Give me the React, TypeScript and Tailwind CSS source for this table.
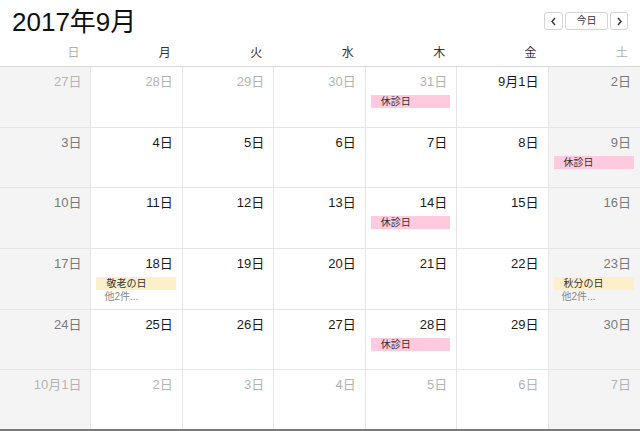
import React from "react";

type Ev = { label: string; kind: "pink" | "yellow" };
type Day = { label: string; muted?: boolean; events?: Ev[]; more?: string };

const weekdays = ["日", "月", "火", "水", "木", "金", "土"];

const weeks: Day[][] = [
	[
		{ label: "27日", muted: true },
		{ label: "28日", muted: true },
		{ label: "29日", muted: true },
		{ label: "30日", muted: true },
		{ label: "31日", muted: true, events: [{ label: "休診日", kind: "pink" }] },
		{ label: "9月1日" },
		{ label: "2日" },
	],
	[
		{ label: "3日" },
		{ label: "4日" },
		{ label: "5日" },
		{ label: "6日" },
		{ label: "7日" },
		{ label: "8日" },
		{ label: "9日", events: [{ label: "休診日", kind: "pink" }] },
	],
	[
		{ label: "10日" },
		{ label: "11日" },
		{ label: "12日" },
		{ label: "13日" },
		{ label: "14日", events: [{ label: "休診日", kind: "pink" }] },
		{ label: "15日" },
		{ label: "16日" },
	],
	[
		{ label: "17日" },
		{ label: "18日", events: [{ label: "敬老の日", kind: "yellow" }], more: "他2件..." },
		{ label: "19日" },
		{ label: "20日" },
		{ label: "21日" },
		{ label: "22日" },
		{ label: "23日", events: [{ label: "秋分の日", kind: "yellow" }], more: "他2件..." },
	],
	[
		{ label: "24日" },
		{ label: "25日" },
		{ label: "26日" },
		{ label: "27日" },
		{ label: "28日", events: [{ label: "休診日", kind: "pink" }] },
		{ label: "29日" },
		{ label: "30日" },
	],
	[
		{ label: "10月1日", muted: true },
		{ label: "2日", muted: true },
		{ label: "3日", muted: true },
		{ label: "4日", muted: true },
		{ label: "5日", muted: true },
		{ label: "6日", muted: true },
		{ label: "7日", muted: true },
	],
];

function Cell({ day, col }: { day: Day; col: number }) {
	const weekend = col === 0 || col === 6;
	let color = "text-[#1a1a1a]";
	if (day.muted) color = "text-[#b4b4b4]";
	else if (weekend) color = "text-[#7a7a7a]";

	return (
		<div
			className={`flex flex-col border-b border-[#e6e6e6] ${col < 6 ? "border-r" : ""} ${
				weekend ? "bg-[#f4f4f4]" : "bg-white"
			}`}
		>
			<div className={`text-right pr-[9px] pt-[7px] text-[13px] leading-[16px] ${color}`}>{day.label}</div>
			<div className="flex flex-col pl-[5px] pr-[6px] pt-[5px]">
				{day.events?.map((e, i) => (
					<div
						key={i}
						className={`h-[13px] pl-[10px] text-[10px] leading-[13px] text-[#333] ${
							e.kind === "pink" ? "bg-[#ffcade]" : "bg-[#fdefca]"
						}`}
					>
						{e.label}
					</div>
				))}
				{day.more && <div className="pl-[8px] text-[10px] leading-[14px] text-[#888]">{day.more}</div>}
			</div>
		</div>
	);
}

export default function App() {
	return (
		<div
			className="relative w-[640px] h-[431px] flex flex-col bg-white overflow-hidden"
			style={{ fontFamily: '"Liberation Sans", "Noto Sans CJK JP", sans-serif' }}
		>
			<header className="h-[67px] shrink-0 flex flex-col border-b border-[#d6d6d6]">
				<div className="flex items-start justify-between">
					<h1 className="pl-[12px] pt-[6px] text-[26px] leading-[32px] text-[#111]">2017年9月</h1>
					<div className="flex gap-[2px] pt-[12px] pr-[12px]">
						<button className="w-[19px] h-[18px] border border-[#d4d4d4] rounded-[3px] bg-white flex items-center justify-center text-[#333]">
							<svg width="7" height="9" viewBox="0 0 7 9">
								<path d="M5 1 L2 4.5 L5 8" fill="none" stroke="#333" strokeWidth="1.4" />
							</svg>
						</button>
						<button className="w-[43px] h-[18px] border border-[#d4d4d4] rounded-[3px] bg-white text-[10px] leading-[16px] text-[#333]">
							今日
						</button>
						<button className="w-[18px] h-[18px] border border-[#d4d4d4] rounded-[3px] bg-white flex items-center justify-center">
							<svg width="7" height="9" viewBox="0 0 7 9">
								<path d="M2 1 L5 4.5 L2 8" fill="none" stroke="#333" strokeWidth="1.4" />
							</svg>
						</button>
					</div>
				</div>
				<div className="grid grid-cols-7 mt-auto pb-[6px]">
					{weekdays.map((w, i) => (
						<div
							key={w}
							className={`text-right pr-[12px] text-[12px] leading-[14px] ${
								i === 0 || i === 6 ? "text-[#b0b0b0]" : "text-[#333]"
							}`}
						>
							{w}
						</div>
					))}
				</div>
			</header>
			<div className="flex-1 grid grid-cols-7 grid-rows-6">
				{weeks.map((week, r) => week.map((d, c) => <Cell key={`${r}-${c}`} day={d} col={c} />))}
			</div>
			<div className="absolute left-0 right-0 bottom-0 h-[2px] bg-[#7a7a7a]" />
		</div>
	);
}
